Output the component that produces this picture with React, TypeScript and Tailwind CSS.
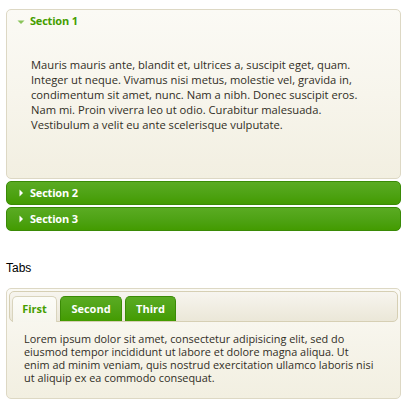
import React from "react"

const sans = { fontFamily: '"Open Sans", "Noto Sans", sans-serif' }

function Arrow({ open }: { open: boolean }) {
  return open ? (
    <svg width="8" height="8" viewBox="0 0 8 8" className="shrink-0">
      <path d="M0.5 2.5 L7.5 2.5 L4 6 Z" fill="#8ac45a" />
    </svg>
  ) : (
    <svg width="8" height="8" viewBox="0 0 8 8" className="shrink-0">
      <path d="M2.5 0.5 L6 4 L2.5 7.5 Z" fill="#ffffff" />
    </svg>
  )
}

function ClosedHeader({ title }: { title: string }) {
  return (
    <div className="h-[24px] flex items-center pl-[10px] gap-[5px] rounded-[5px] border border-[#3a8a06] bg-gradient-to-b from-[#5aab22] to-[#439b00] text-white text-[11px] font-bold tracking-[-0.2px]">
      <Arrow open={false} />
      <span>{title}</span>
    </div>
  )
}

export default function App() {
  return (
    <div className="w-[409px] h-[407px] bg-white px-[6px] pt-[9px] text-[#312e25]" style={sans}>
      {/* accordion */}
      <div className="w-[395px] flex flex-col gap-[2px]">
        <div className="h-[170px] rounded-[5px] border border-[#ddd8c4] bg-gradient-to-b from-[#fbfaf5] via-[#f7f5ec] to-[#f2efe1] flex flex-col">
          <div className="h-[23px] flex items-center pl-[10px] gap-[5px] text-[#459e00] text-[11px] font-bold tracking-[-0.2px]">
            <Arrow open={true} />
            <span>Section 1</span>
          </div>
          <p className="pl-[24px] pt-[24px] text-[11.2px] leading-[15px]">
            Mauris mauris ante, blandit et, ultrices a, suscipit eget, quam.
            <br />
            Integer ut neque. Vivamus nisi metus, molestie vel, gravida in,
            <br />
            condimentum sit amet, nunc. Nam a nibh. Donec suscipit eros.
            <br />
            Nam mi. Proin viverra leo ut odio. Curabitur malesuada.
            <br />
            Vestibulum a velit eu ante scelerisque vulputate.
          </p>
        </div>
        <ClosedHeader title="Section 2" />
        <ClosedHeader title="Section 3" />
      </div>

      <div className="mt-[30px] text-[12px] leading-[14px] text-black" style={{ fontFamily: '"Liberation Sans", Arial, sans-serif' }}>
        Tabs
      </div>

      {/* tabs */}
      <div className="mt-[13px] w-[395px] h-[111px] rounded-[5px] border border-[#ddd8c4] bg-gradient-to-b from-[#fbfaf5] via-[#f6f4ea] to-[#f2efe1] p-[2px]">
        <div className="h-[31px] rounded-[5px] border border-[#d6cfb4] bg-gradient-to-b from-[#f7f5ef] via-[#f1eee3] to-[#ebe7d8] flex items-end gap-[3px] pl-[2px]">
          <div className="h-[26px] w-[45px] -mb-px rounded-t-[5px] border border-b-0 border-[#d9d4bd] bg-gradient-to-b from-[#fcfcf8] to-[#f7f6ee] flex items-center justify-center text-[#459e00] text-[11px] font-bold">
            First
          </div>
          <div className="h-[25px] w-[62px] rounded-t-[5px] border border-b-0 border-[#3a8a06] bg-gradient-to-b from-[#5aab22] to-[#439b00] flex items-center justify-center text-white text-[11px] font-bold">
            Second
          </div>
          <div className="h-[25px] w-[51px] rounded-t-[5px] border border-b-0 border-[#3a8a06] bg-gradient-to-b from-[#5aab22] to-[#439b00] flex items-center justify-center text-white text-[11px] font-bold">
            Third
          </div>
        </div>
        <p className="pl-[15px] pt-[10px] text-[10.9px] leading-[13px]">
          Lorem ipsum dolor sit amet, consectetur adipisicing elit, sed do
          <br />
          eiusmod tempor incididunt ut labore et dolore magna aliqua. Ut
          <br />
          enim ad minim veniam, quis nostrud exercitation ullamco laboris nisi
          <br />
          ut aliquip ex ea commodo consequat.
        </p>
      </div>
    </div>
  )
}
